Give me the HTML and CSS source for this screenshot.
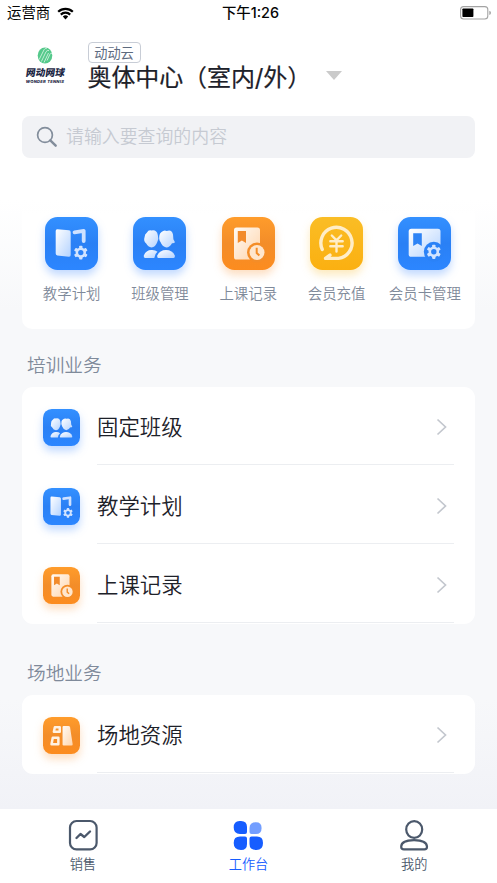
FILE: index.html
```
<!DOCTYPE html>
<html lang="zh-CN">
<head>
<meta charset="utf-8">
<title>工作台</title>
<link rel="stylesheet" href="styles.css">
</head>
<body>
<svg class="sprite" width="0" height="0" aria-hidden="true">
  <defs>
    <linearGradient id="blue" x2="0" y2="1"><stop stop-color="#3390ff"/><stop offset=".5" stop-color="#2a80f5"/><stop offset="1" stop-color="#2c86ff"/></linearGradient>
    <linearGradient id="orange" x2="0" y2="1"><stop stop-color="#ff9c2b"/><stop offset=".5" stop-color="#f38d29"/><stop offset="1" stop-color="#fc8c1f"/></linearGradient>
    <linearGradient id="yellow" x2="0" y2="1"><stop stop-color="#fabd25"/><stop offset="1" stop-color="#fbb011"/></linearGradient>
    <linearGradient id="ice" x2="1" y2="1"><stop stop-color="#fff"/><stop offset="1" stop-color="#b4d3ff"/></linearGradient>
    <linearGradient id="cream" x2="1" y2="1"><stop stop-color="#fffaf4"/><stop offset="1" stop-color="#ffd5ac"/></linearGradient>
  </defs>
  <symbol id="gear" viewBox="-8 -8 16 16">
    <g fill="#d2e4ff"><rect id="tooth" x="-1.7" y="-7.1" width="3.4" height="14.2" rx=".8"/><use href="#tooth" transform="rotate(60)"/><use href="#tooth" transform="rotate(120)"/><circle r="5.3"/></g>
    <circle r="2.7" fill="#2b82f7"/>
  </symbol>
  <symbol id="plan" viewBox="0 0 53 53">
    <rect width="53" height="53" rx="12.5" fill="url(#blue)"/>
    <path d="M12.5 12.2 24 13.3Q25.7 13.5 25.7 15.2V38Q25.7 40 23.8 39.8L12.3 38.5Q10.7 38.3 10.7 36.6V14Q10.7 12 12.5 12.2Z" fill="url(#ice)"/>
    <path d="M29.5 15.3 38.7 13.9V24" fill="none" stroke="#cee1ff" stroke-width="3.8" stroke-linecap="round" stroke-linejoin="round"/>
    <use href="#gear" x="28" y="27.8" width="15.6" height="15.6"/>
  </symbol>
  <symbol id="class" viewBox="0 0 53 53">
    <rect width="53" height="53" rx="12.5" fill="url(#blue)"/>
    <path d="M14 15.5Q15.5 12.5 18.5 13.5 23.8 12.5 24.8 18 26 21.5 24.3 25 22.5 30 18.5 30.5 15 30 13.2 26.5 10.2 24 11.6 20 11.6 17 14 15.5Z" fill="url(#ice)"/>
    <path d="M28.5 15Q31 12.6 33.8 14 38.8 12.2 40 17.5L40.4 22.3 42 25.3Q40.6 26.8 39 26.2 37 30.2 33.3 30.5 29.2 29.5 27.5 25 25.5 22.5 26.5 18 27 16 28.5 15Z" fill="url(#ice)"/>
    <path d="M12 41Q10.4 40.7 10.8 38.5 13 33 18.5 33 22.2 32.8 24.5 34.7 21.5 37 21.3 41Z" fill="url(#ice)"/>
    <path d="M25.2 41Q23.7 40.7 24.3 38.5 26.8 33 33 33 39.5 33 41.8 38.5 42.5 40.7 40.6 41Z" fill="url(#ice)"/>
  </symbol>
  <symbol id="record" viewBox="0 0 53 53">
    <rect width="53" height="53" rx="12.5" fill="url(#orange)"/>
    <rect x="12" y="10.5" width="26" height="32" rx="2.6" fill="url(#cream)"/>
    <path d="M15.8 14H24V26L19.9 23.5 15.8 26Z" fill="#f28b2b"/>
    <circle cx="35" cy="35.5" r="10" fill="#f48d28"/>
    <circle cx="35" cy="35.5" r="7.5" fill="#ffe6cd"/>
    <path d="M34.7 30.8V36L37.4 38.4" fill="none" stroke="#f48d28" stroke-width="2"/>
  </symbol>
  <symbol id="recharge" viewBox="0 0 53 53">
    <rect width="53" height="53" rx="12.5" fill="url(#yellow)"/>
    <path d="M12.3 32.5A15.6 15.6 0 1 1 28.5 41.4H15.5L20 38" fill="none" stroke="#ffedc7" stroke-width="3.4" stroke-linecap="round" stroke-linejoin="round"/>
    <path d="M21.8 18.5 26.5 23.3 31.2 18.5M20.3 24.2H32.7M20.3 29.2H32.7M26.5 24V34.5" fill="none" stroke="#ffedc7" stroke-width="2.4" stroke-linecap="round"/>
  </symbol>
  <symbol id="card" viewBox="0 0 53 53">
    <rect width="53" height="53" rx="12.5" fill="url(#blue)"/>
    <rect x="10.7" y="11.8" width="31.8" height="28" rx="2.6" fill="url(#ice)"/>
    <path d="M15.2 16.3H23.8V29L19.5 26.5 15.2 29Z" fill="#2d83f5"/>
    <circle cx="35.8" cy="34.8" r="10" fill="#2b82f7"/>
    <use href="#gear" x="27.8" y="26.8" width="16" height="16"/>
  </symbol>
  <symbol id="venue" viewBox="0 0 53 53">
    <rect width="53" height="53" rx="12.5" fill="url(#orange)"/>
    <path d="M17 14.8H24V21.2H15.6ZM14 29.7H22V39H12.2Z" fill="none" stroke="#fff2e3" stroke-width="3.6" stroke-linejoin="round"/>
    <path d="M29.5 13H36.5Q38.4 13 38.8 15L42.5 39Q42.8 41 40.8 41H29.5Q28 41 28 39.5V14.5Q28 13 29.5 13Z" fill="url(#cream)"/>
  </symbol>
</svg>

<header class="status">
  <div class="carrier">运营商
    <svg width="17" height="13" viewBox="0 0 17 13"><path d="M1.2 4.8A10.5 10.5 0 0 1 15.8 4.8M3.8 7.6A6.8 6.8 0 0 1 13.2 7.6" fill="none" stroke="#000" stroke-width="2.2"/><path d="M5.8 9.6A3.9 3.9 0 0 1 11.2 9.6L8.5 12.4Z"/></svg>
  </div>
  <div class="time">下午1:26</div>
  <svg class="battery" width="32" height="14" viewBox="0 0 32 14"><rect x=".6" y=".6" width="27.2" height="12.4" rx="3" fill="#fff" stroke="#a3a3a3" stroke-width="1.1"/><rect x="2.4" y="2.5" width="11" height="8.6" rx=".8"/><path d="M29.3 4.7Q31 5.1 31 6.8T29.3 8.9Z" fill="#a3a3a3"/></svg>
</header>

<section class="venue-bar">
  <div class="logo">
    <svg width="16" height="17" viewBox="0 0 16 17"><ellipse cx="8" cy="8.5" rx="7.3" ry="8" fill="#55c98b"/><path d="M2.2 12.5 7 2.8Q8 1 9.8 1.6M4.4 14.5 9 4.8Q10 3 12 3.5M10 13.5 12.8 7.5Q13.5 6 15 6.2M7 15.5 11.5 6" fill="none" stroke="#dff6e9" stroke-width=".8"/></svg>
    <div class="logo-name">网动网球</div>
    <div class="logo-sub">WONDER TENNIS</div>
  </div>
  <div class="venue-info">
    <span class="tag">动动云</span>
    <div class="venue-name"><span>奥体中心（室内/外）</span><i class="caret"></i></div>
  </div>
</section>

<div class="search">
  <svg width="22" height="22" viewBox="0 0 22 22" fill="none" stroke="#828d9b"><circle cx="9" cy="9" r="7.4" stroke-width="1.7"/><path d="M14.3 14.3 19.7 19.7" stroke-width="2.4" stroke-linecap="round"/></svg>
  <span>请输入要查询的内容</span>
</div>

<main>
  <nav class="shortcuts">
    <a><svg class="tile tile-blue"><use href="#plan"/></svg><span>教学计划</span></a>
    <a><svg class="tile tile-blue"><use href="#class"/></svg><span>班级管理</span></a>
    <a><svg class="tile tile-orange"><use href="#record"/></svg><span>上课记录</span></a>
    <a><svg class="tile tile-yellow"><use href="#recharge"/></svg><span>会员充值</span></a>
    <a><svg class="tile tile-blue"><use href="#card"/></svg><span>会员卡管理</span></a>
  </nav>

  <h2>培训业务</h2>
  <div class="list">
    <div class="row"><svg class="tile tile-blue"><use href="#class"/></svg><div class="row-body"><span>固定班级</span><svg class="chevron" viewBox="0 0 12 18"><path d="M1.5 1.5 9.5 9 1.5 16.5"/></svg></div></div>
    <div class="row"><svg class="tile tile-blue"><use href="#plan"/></svg><div class="row-body"><span>教学计划</span><svg class="chevron" viewBox="0 0 12 18"><path d="M1.5 1.5 9.5 9 1.5 16.5"/></svg></div></div>
    <div class="row"><svg class="tile tile-orange"><use href="#record"/></svg><div class="row-body"><span>上课记录</span><svg class="chevron" viewBox="0 0 12 18"><path d="M1.5 1.5 9.5 9 1.5 16.5"/></svg></div></div>
  </div>

  <h2 class="second">场地业务</h2>
  <div class="list">
    <div class="row"><svg class="tile tile-orange"><use href="#venue"/></svg><div class="row-body"><span>场地资源</span><svg class="chevron" viewBox="0 0 12 18"><path d="M1.5 1.5 9.5 9 1.5 16.5"/></svg></div></div>
  </div>
</main>

<footer class="tabs">
  <a><svg width="32" height="32" viewBox="0 0 32 32" fill="none" stroke="#4b586b" stroke-linecap="round" stroke-linejoin="round"><rect x="3" y="2" width="26.6" height="28.4" rx="6.5" stroke-width="2.2"/><path d="M9.5 19 13.5 15 17.3 18 23 12.5" stroke-width="2.4"/></svg><span>销售</span></a>
  <a class="active"><svg width="32" height="32" viewBox="0 0 32 32" fill="#165dff"><path d="M7.5 2H9Q15 2 15 8V13Q15 15 13 15H8Q1.7 15 1.7 8.5 1.7 2 7.5 2ZM8 17.6H13Q15 17.6 15 19.6V25Q15 31 9 31 1.7 31 1.7 24 1.7 17.6 8 17.6ZM19.5 17.6H25Q31 17.6 31 24 31 31 24.5 31 17.5 31 17.5 25V19.6Q17.5 17.6 19.5 17.6Z"/><path fill="#739eff" d="M24 3.2Q29.6 3.2 29.6 9 29.6 15 24 15H19.5Q17.5 15 17.5 13V9Q17.5 3.2 24 3.2Z"/></svg><span>工作台</span></a>
  <a><svg width="32" height="32" viewBox="0 0 32 32" fill="none" stroke="#4b586b" stroke-width="2.2"><ellipse cx="16.2" cy="10.5" rx="8" ry="8.4"/><path d="M3.2 27.7Q3.2 21.2 16 21.1 28.8 21.2 29 27.7 29 30.4 26.3 30.4H6Q3.2 30.4 3.2 27.7Z"/></svg><span>我的</span></a>
</footer>
</body>
</html>
```
FILE: styles.css
```
* { box-sizing: border-box; }
body {
  margin: 0;
  width: 497px;
  height: 883px;
  overflow: hidden;
  display: flex;
  flex-direction: column;
  font-family: "Inter", "Noto Sans CJK SC", sans-serif;
  background: linear-gradient(#fff 200px, #f7f8fa 310px, #f7f8fa 700px, #f1f2f7 809px);
}
.sprite { position: absolute; }
.status {
  height: 26px;
  display: grid;
  grid-template-columns: 1fr auto 1fr;
  align-items: center;
  padding: 0 5px 0 7px;
  font-size: 14.4px;
  line-height: 26px;
  color: #050505;
}
.carrier { display: flex; align-items: center; gap: 7px; }
.time { font-weight: 500; transform: translateX(1px); }
.battery { justify-self: end; }

.venue-bar { height: 90px; display: flex; padding: 16px 22px 0; }
.logo {
  width: 46px;
  margin-right: 19.5px;
  padding-top: 5px;
  display: flex;
  flex-direction: column;
  align-items: center;
  color: #1c2744;
  white-space: nowrap;
}
.logo-name { font-size: 9.7px; font-weight: 900; line-height: 12px; margin-top: 3px; transform: skewX(-8deg); }
.logo-sub { font-size: 4.1px; font-weight: 800; font-style: italic; line-height: 6px; letter-spacing: .25px; }
.venue-info { display: flex; flex-direction: column; align-items: flex-start; }
.tag {
  width: 53px;
  height: 21px;
  border: 1px solid #c8cdd6;
  border-radius: 4px;
  font-size: 13.2px;
  line-height: 20px;
  text-align: center;
  color: #5d6b7f;
}
.venue-name {
  display: flex;
  align-items: center;
  height: 26px;
  margin-top: -1px;
  font-size: 24px;
  font-weight: 400;
  color: #1d2129;
  -webkit-text-stroke: .2px;
  white-space: nowrap;
}
.venue-name span { width: 224px; letter-spacing: -.1px; }
.caret { border: 8px solid transparent; border-top: 9px solid #cacaca; border-bottom: 0; margin-left: 14px; }

.search {
  flex: none;
  height: 42px;
  margin: 0 22px;
  padding-left: 14px;
  display: flex;
  align-items: center;
  gap: 8px;
  border-radius: 8px;
  background: #f1f2f5;
  font-size: 17.9px;
  line-height: 42px;
  font-weight: 350;
  color: #c6cad2;
}

main { flex: 1; padding: 38px 22px 0; }
.tile { display: block; flex: none; overflow: visible; }
.tile-blue { filter: drop-shadow(0 5px 4px rgba(51, 130, 255, .3)); }
.tile-orange { filter: drop-shadow(0 5px 4px rgba(250, 145, 50, .3)); }
.tile-yellow { filter: drop-shadow(0 5px 4px rgba(250, 185, 40, .3)); }

.shortcuts {
  height: 133px;
  padding: 20.5px 6px 0 5.5px;
  display: grid;
  grid-template-columns: repeat(5, 1fr);
  background: linear-gradient(rgba(255,255,255,0), #fff 20px);
  border-radius: 10px;
}
.shortcuts a { display: flex; flex-direction: column; align-items: center; }
.shortcuts .tile { width: 53px; height: 53px; }
.shortcuts span {
  margin-top: 14.5px;
  font-size: 14.4px;
  font-weight: 350;
  line-height: 20px;
  white-space: nowrap;
  color: #7f8a9a;
}

h2 {
  margin: 23px 5px 7px;
  height: 28px;
  font-size: 18.7px;
  font-weight: 350;
  line-height: 28px;
  color: #7f8a9a;
}
h2.second { margin-top: 36px; }
.list { border-radius: 11px; background: #fff; padding: 0 21px 0 21px; }
.row { height: 79px; display: flex; align-items: flex-start; }
.row .tile { width: 37px; height: 37px; margin: 22px 17px 0 0; }
.row-body {
  flex: 1;
  height: 78px;
  padding: 3px 6px 0 0;
  display: flex;
  align-items: center;
  justify-content: space-between;
  border-bottom: 1px solid #eceef1;
  font-size: 21.4px;
  font-weight: 350;
  color: #1d2129;
}
.row-body span { margin-top: -4px; }
.chevron { width: 12px; height: 18px; fill: none; stroke: #c3c7ce; stroke-width: 1.7; }

.tabs {
  flex: none;
  height: 74px;
  display: grid;
  grid-template-columns: repeat(3, 1fr);
  background: #fff;
  color: #4b586b;
  font-size: 13.2px;
  font-weight: 350;
}
.tabs a { display: flex; flex-direction: column; align-items: center; padding-top: 10px; }
.tabs span { line-height: 20px; margin-top: 3px; }
.tabs .active { color: #165dff; }
```
